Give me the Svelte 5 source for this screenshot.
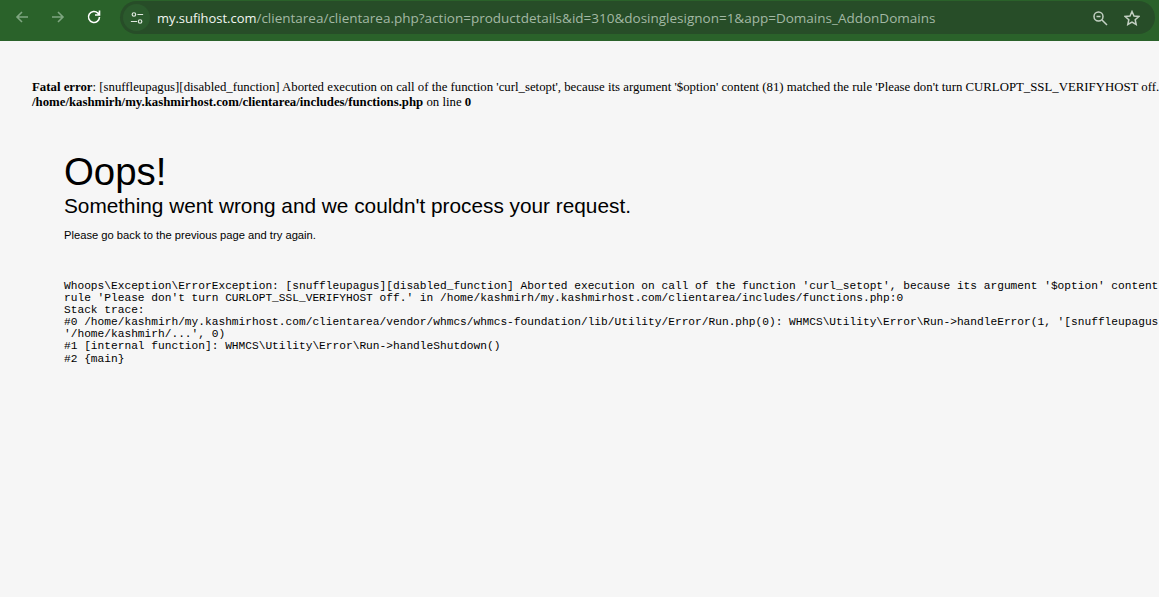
<script>
  const urlHost = "my.sufihost.com";
  const urlPath = "/clientarea/clientarea.php?action=productdetails&id=310&dosinglesignon=1&app=Domains_AddonDomains";
  const trace = `Whoops\\Exception\\ErrorException: [snuffleupagus][disabled_function] Aborted execution on call of the function 'curl_setopt', because its argument '$option' content (81) matched the
rule 'Please don't turn CURLOPT_SSL_VERIFYHOST off.' in /home/kashmirh/my.kashmirhost.com/clientarea/includes/functions.php:0
Stack trace:
#0 /home/kashmirh/my.kashmirhost.com/clientarea/vendor/whmcs/whmcs-foundation/lib/Utility/Error/Run.php(0): WHMCS\\Utility\\Error\\Run->handleError(1, '[snuffleupagus]...',
'/home/kashmirh/...', 0)
#1 [internal function]: WHMCS\\Utility\\Error\\Run->handleShutdown()
#2 {main}`;
</script>

<div class="page">
  <header class="toolbar">
    <svg class="nav dim" viewBox="0 0 16 16"><path d="M14 8H3M8 3L3 8l5 5" /></svg>
    <svg class="nav dim" viewBox="0 0 16 16"><path d="M2 8h11M8 3l5 5-5 5" /></svg>
    <svg class="nav reload" viewBox="0 0 16 16"><path d="M13.500 8a5.500 5.500 0 1 1-1.600-3.900L13.500 6M13.500 1.500V6H9" /></svg>
    <div class="omnibox">
      <span class="tune">
        <svg viewBox="0 0 16 16"><circle cx="4.500" cy="4" r="2" /><path d="M8.500 4H15M1 12h7" /><circle cx="11.500" cy="12" r="2" /></svg>
      </span>
      <span class="url"><span class="host">{urlHost}</span>{urlPath}</span>
      <svg class="act" viewBox="0 0 16 16"><circle cx="6.500" cy="6.500" r="4.500" /><path d="M10 10l5 5M4.500 6.500h4" /></svg>
      <svg class="act star" viewBox="0 0 16 16"><path d="M8 1.500l2 4.500 4.800.5-3.600 3.200 1 4.800L8 12.100l-4.200 2.400 1-4.800L1.200 6.500 6 6z" /></svg>
    </div>
  </header>

  <main>
    <p class="fatal"><b>Fatal error</b>: [snuffleupagus][disabled_function] Aborted execution on call of the function 'curl_setopt', because its argument '$option' content (81) matched the rule 'Please don't turn CURLOPT_SSL_VERIFYHOST off.' in<br /><b>/home/kashmirh/my.kashmirhost.com/clientarea/includes/functions.php</b> on line <b>0</b></p>
    <div class="box">
      <h1>Oops!</h1>
      <h2>Something went wrong and we couldn't process your request.</h2>
      <p class="back">Please go back to the previous page and try again.</p>
      <pre>{trace}</pre>
    </div>
  </main>
</div>

<style>
  :global(body) {
    margin: 0;
    background: #f6f6f6;
  }
  .page {
    width: 1159px;
    height: 597px;
    overflow: hidden;
    color: #000;
  }
  .toolbar {
    display: flex;
    align-items: center;
    height: 41px;
    padding: 0 4px 7px 14px;
    box-sizing: border-box;
    background: #2a622a;
  }
  .nav {
    width: 16px;
    height: 16px;
    margin-right: 20px;
    flex: none;
    fill: none;
    stroke: #fff;
    stroke-width: 1.6;
  }
  .dim {
    stroke: #7fa681;
  }
  .reload {
    margin-right: 18px;
  }
  .omnibox {
    display: flex;
    align-items: center;
    flex: 1;
    height: 33px;
    margin-top: 1px;
    border-radius: 17px;
    background: #274d28;
  }
  .tune {
    display: flex;
    align-items: center;
    justify-content: center;
    width: 27px;
    height: 27px;
    margin: 0 7px 0 3px;
    border-radius: 50%;
    background: #2b5a2d;
  }
  .tune svg {
    width: 14px;
    height: 14px;
    fill: none;
    stroke: #dfe8df;
    stroke-width: 1.4;
  }
  .url {
    flex: 1;
    font: 13.500px "Open Sans", sans-serif;
    color: #a3b8a4;
    white-space: nowrap;
  }
  .host {
    color: #f2f6f2;
    font-size: 12.950px;
    font-weight: 500;
  }
  .act {
    width: 16px;
    height: 16px;
    margin-right: 16px;
    fill: none;
    stroke: #c3d0c3;
    stroke-width: 1.5;
  }
  .star {
    margin-right: 15px;
  }
  main {
    padding-top: 39px;
  }
  .fatal {
    margin: 0 0 0 32px;
    font: 12.800px/15px "Liberation Serif", serif;
    white-space: nowrap;
  }
  .box {
    padding: 40px 0 0 64px;
    font-family: "Liberation Sans", sans-serif;
  }
  h1 {
    margin: 0;
    font-size: 38.400px;
    font-weight: 400;
    line-height: 44px;
  }
  h2 {
    margin: 0;
    font-size: 20.800px;
    font-weight: 400;
    line-height: 24px;
  }
  .back {
    margin: 10px 0 0;
    font-size: 11.200px;
    line-height: 14px;
  }
  pre {
    margin: 38px 0 0;
    font: 11.200px/12.100px "Liberation Mono", monospace;
    white-space: pre;
  }
</style>
